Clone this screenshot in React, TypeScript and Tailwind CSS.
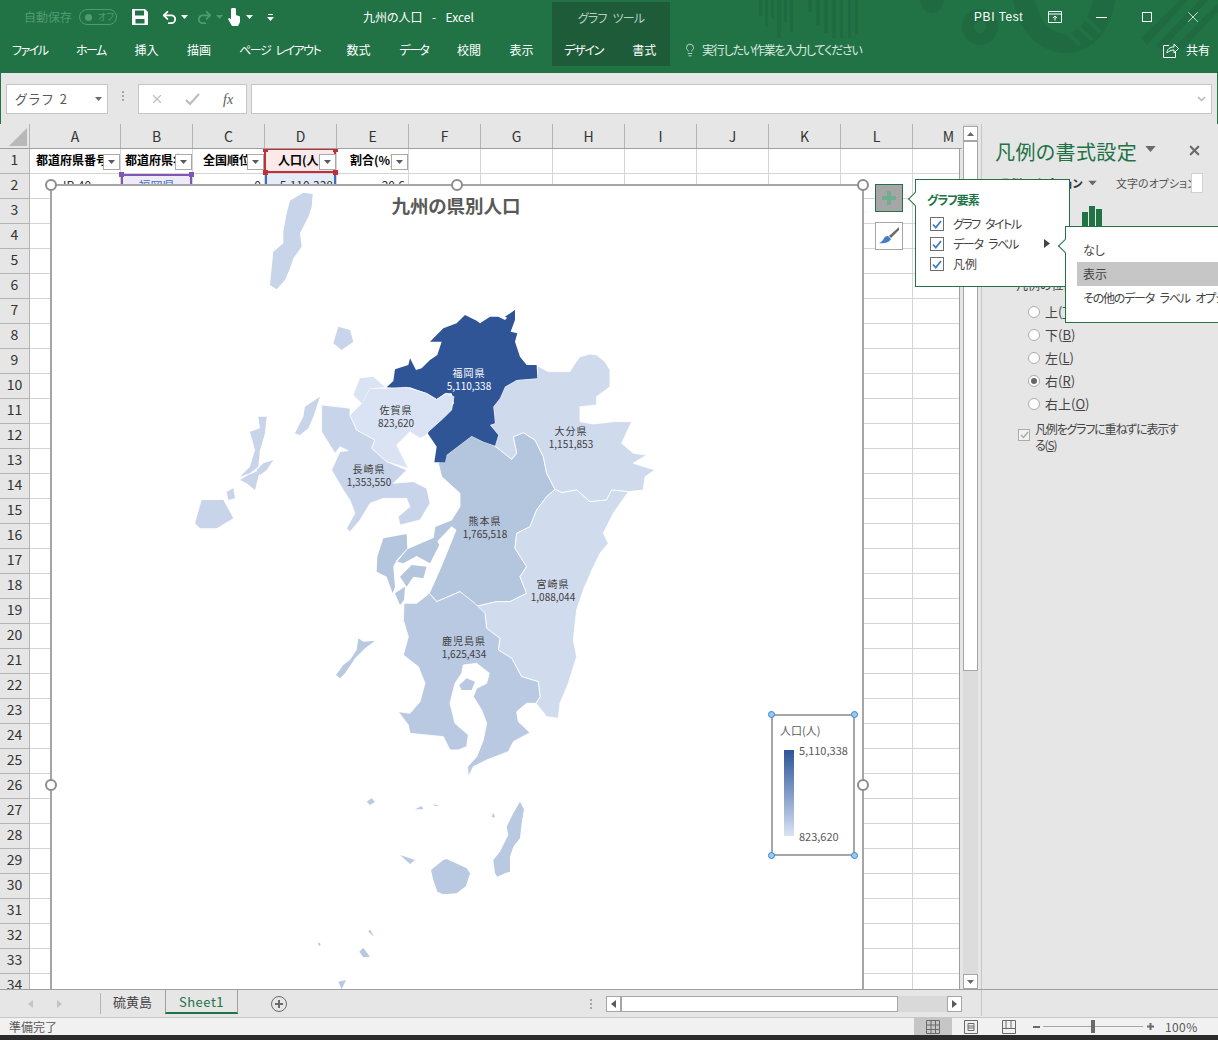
import { Lightbulb, Redo2, Undo2, X } from "lucide-react";

const FONT = "font-['Noto_Sans_CJK_JP','Noto_Sans_CJK_SC',sans-serif] [font-feature-settings:'palt']";

const tabs = [
  { label: "ファイル", w: 35, kana: true },
  { label: "ホーム", w: 31, kana: true },
  { label: "挿入", w: 24 },
  { label: "描画", w: 24 },
  { label: "ページ レイアウト", w: 79, kana: true },
  { label: "数式", w: 24 },
  { label: "データ", w: 30, kana: true },
  { label: "校閲", w: 24 },
  { label: "表示", w: 24 },
];

const columns = [
  { name: "A", w: "w-[91px]" },
  { name: "B", w: "w-[72px]" },
  { name: "C", w: "w-[72px]" },
  { name: "D", w: "w-[72px]" },
  { name: "E", w: "w-[72px]" },
  { name: "F", w: "w-[72px]" },
  { name: "G", w: "w-[72px]" },
  { name: "H", w: "w-[72px]" },
  { name: "I", w: "w-[72px]" },
  { name: "J", w: "w-[72px]" },
  { name: "K", w: "w-[72px]" },
  { name: "L", w: "w-[72px]" },
  { name: "M", w: "w-[72px]" },
];

const rows = Array.from({ length: 34 }, (_, i) => i + 1);

// map outlines, in 3x crop coordinates (see the translate/scale groups below)
const fukuoka = "20,262 40,243 45,208 85,195 90,175 108,210 125,205 150,180 172,165 185,125 150,125 190,85 230,70 255,45 290,62 300,70 330,50 355,50 375,60 405,30 405,60 392,95 412,100 405,125 420,170 440,195 470,195 472,235 410,240 375,260 360,295 340,320 345,370 330,375 355,405 345,437 310,425 275,408 200,465 195,487 163,487 170,440 140,395 160,375 200,340 222,310 215,280 195,280 170,298 140,280 90,262 50,265";
const oita = "472,197 505,215 570,215 585,190 600,170 630,162 650,165 675,185 690,210 690,260 670,275 650,290 650,315 600,320 600,365 640,372 700,365 755,365 725,430 760,460 800,465 760,490 825,510 795,530 790,570 745,575 695,570 680,600 630,605 590,570 545,578 525,568 500,520 490,470 465,420 430,398 400,410 410,460 395,478 360,450 342,437 355,405 330,375 345,370 340,320 360,295 375,260 410,240 472,235";
const kumamoto = "175,490 200,465 275,408 310,425 345,437 395,478 410,460 400,410 430,398 465,420 490,470 500,520 525,568 500,590 470,630 450,680 410,700 405,745 440,800 420,830 440,880 390,905 350,905 285,920 240,875 170,905 148,880 175,820 200,760 228,690 215,680 172,725 160,712 165,680 215,660 240,620 240,580 185,530";
const amakusa = "10,715 80,702 82,745 50,780 40,800 45,860 38,880 20,830 -10,815 -8,770";
const amakusa2 = "82,748 165,712 178,735 150,790 110,768 70,790 52,785";
const amakusa3 = "60,830 95,795 140,800 130,835 100,830 80,860";
const amakusa4 = "45,880 75,860 72,900 60,915";
const miyazaki = "525,568 545,578 590,570 630,605 680,600 695,570 745,575 700,640 670,700 685,730 660,760 636,810 610,870 590,930 580,1020 590,1070 565,1150 540,1210 535,1255 500,1250 468,1210 480,1190 475,1145 425,1130 395,1075 355,1050 360,1015 320,985 315,940 285,920 350,905 390,905 440,880 420,830 440,800 405,745 410,700 450,680 470,630 500,590";
const kagoshima = "222,100 260,100 298,70 320,95 390,65 435,100 465,130 470,175 510,205 505,240 545,265 575,320 625,335 630,380 618,400 590,400 560,425 565,455 600,488 550,515 535,545 470,570 430,590 415,620 413,590 440,560 460,510 470,460 455,420 430,380 440,355 470,340 478,310 440,280 400,285 395,310 375,340 360,400 375,460 415,495 410,530 385,540 360,540 340,500 240,490 235,465 205,425 240,430 270,395 285,340 265,290 220,255 235,200 220,150";
const sakurajima = "388,345 410,325 435,335 425,360 395,360";
const koshiki = "18,315 40,285 60,270 80,240 85,205 100,215 135,212 105,235 75,265 45,310 30,325";
const saga = "510,345 545,310 570,265 620,265 680,262 740,280 770,298 800,280 822,290 815,330 790,355 745,395 740,405 720,415 690,395 650,435 685,505 620,485 575,445 585,420 530,390";
const sagaNorth = "520,285 540,235 580,230 615,262 570,265 545,310";
const nagasaki = "425,315 510,325 510,345 530,390 585,420 575,445 620,485 680,510 640,550 700,545 740,565 750,610 720,660 660,675 655,650 690,620 680,595 610,595 570,610 540,660 510,695 500,685 525,640 510,600 490,570 455,510 480,455 505,452 480,440 465,460 425,395";
const hirado = "345,400 370,350 375,320 420,290 400,350 385,385 360,405";
const fukue = "45,670 65,600 130,600 160,655 110,685 60,685";
const goto2 = "140,575 160,565 165,595 145,600";
const goto3 = "180,540 205,525 240,510 225,570 200,550";
const goto4 = "230,510 250,490 280,480 260,510 240,525";
const goto5 = "210,395 240,385 235,350 260,350 255,400 240,450 235,500 210,520 180,530 210,500 225,450";
const iki = "460,130 475,80 510,90 520,125 485,150";
const tsushima = "110,100 120,62 160,38 188,42 185,80 175,110 150,160 155,200 130,235 120,265 105,300 80,328 60,315 70,215 100,190 100,155";
const southIslands = [
  "580,240 600,215 625,165 620,140 640,100 660,65 672,88 665,130 660,175 640,200 630,230 630,275 615,280 592,290 585,280",
  "393,270 430,240 440,237 500,265 510,280 498,318 470,340 430,343 412,335 400,300",
  "300,225 345,240 330,252",
  "200,65 215,55 225,65 210,75",
  "345,88 365,78 370,88",
  "400,72 418,78 405,78",
  "575,112 580,98 585,112",
  "205,455 210,448 222,470",
  "178,515 190,503 210,530 190,532",
  "115,605 138,600 125,628",
  "54,490 60,488 62,496 56,497",
];

const labels = [
  { x: 469, y: 377, name: "福岡県", num: "5,110,338", fill: "#ffffff" },
  { x: 396, y: 414, name: "佐賀県", num: "823,620", fill: "#404040" },
  { x: 571, y: 435, name: "大分県", num: "1,151,853", fill: "#404040" },
  { x: 369, y: 473, name: "長崎県", num: "1,353,550", fill: "#404040" },
  { x: 485, y: 525, name: "熊本県", num: "1,765,518", fill: "#404040" },
  { x: 553, y: 588, name: "宮崎県", num: "1,088,044", fill: "#404040" },
  { x: 464, y: 645, name: "鹿児島県", num: "1,625,434", fill: "#404040" },
];

const Caret = ({ className }: { className: string }) => (
  <svg width="7" height="4" viewBox="0 0 7 4" className={className}>
    <path d="M0 0h7L3.500 4z" fill="currentColor" />
  </svg>
);

const Handle = ({ className }: { className: string }) => (
  <span className={`absolute w-[12px] h-[12px] rounded-full bg-white border-2 border-[#8c8c8c] ${className}`} />
);

const BlueHandle = ({ className }: { className: string }) => (
  <span className={`absolute w-[7px] h-[7px] rounded-full bg-[#9cc9f2] border border-[#2f86d6] ${className}`} />
);

const Corner = ({ className }: { className: string }) => (
  <span className={`absolute w-[5px] h-[5px] z-10 ${className}`} />
);

const FilterButton = () => (
  <span className="absolute right-0 top-[5px] w-[17px] h-[16px] bg-white border border-[#a9a9a9] flex items-center justify-center z-10">
    <Caret className="text-[#595959]" />
  </span>
);

const CheckRow = ({ label, track }: { label: string; track: string }) => (
  <div className="flex items-center h-[20px] pl-[14px] text-[12px] text-[#444444]">
    <span className="w-[14px] h-[14px] bg-white border border-[#6e6e6e] flex items-center justify-center mr-[9px]">
      <svg width="10" height="9" viewBox="0 0 10 9">
        <path d="M1 4.500 3.800 7.500 9 1" fill="none" stroke="#3f7fbd" strokeWidth="1.800" />
      </svg>
    </span>
    <span className={`whitespace-nowrap ${track}`}>{label}</span>
  </div>
);

const Radio = ({ label, letter, on }: { label: string; letter: string; on?: boolean }) => (
  <div className="flex items-center h-[23px] pl-[46px] text-[13px] text-[#444444]">
    <span className="w-[12px] h-[12px] rounded-full bg-white border border-[#ababab] flex items-center justify-center mr-[5px]">
      {on && <span className="w-[6px] h-[6px] rounded-full bg-[#666666]" />}
    </span>
    {label}(<span className="underline">{letter}</span>)
  </div>
);

const Header = () => (
  <div className="relative h-[73px] bg-[#217346] flex text-white overflow-hidden shrink-0">
    <svg width="1218" height="73" viewBox="0 0 1218 73" className="absolute left-0 top-0">
      <g fill="#1f6a41">
        <path d="M759 0h3v16h-3zM765 0h3v27h-3zM771 0h3v19h-3zM777 0h4v38h-4zM784 0h3v22h-3zM790 0h3v32h-3z" />
        <path d="M808 0h4v12h-4zM816 0h4v26h-4zM824 0h4v33h-4zM832 0h4v38h-4zM840 0h3v38h-3zM848 0h3v38h-3zM855 0h3v34h-3z" />
        <path d="M920 0h24c-2 17-22 17-24 0z" />
        <path fillRule="evenodd" d="M980 9a18 18 0 1 0 .01 0zM980 21a6 6 0 1 1-.01 0z" />
        <path d="M1013 0h22c6 26 20 36 34 33 12-3 20-14 24-33h22c-3 28-22 52-46 53-30 1-50-22-56-53z" />
        <path d="M1141 38 1180 0h8l-41 45zM1156 45 1200 0h8l-46 50zM1176 45 1218 4v8l-36 38z" />
      </g>
      <path d="M1035 0 1080 45M1050 0 1092 40M1066 0 1100 32" stroke="#217346" strokeWidth="4" />
    </svg>

    <div className="relative w-[552px] shrink-0">
      <div className="h-[34px] flex items-center text-[12px]">
        <span className="ml-[24px] text-[#509a72] whitespace-nowrap">自動保存</span>
        <span className="ml-[7px] w-[38px] h-[16px] rounded-full border border-[#509a72] flex items-center text-[#509a72] text-[9px] whitespace-nowrap">
          <span className="ml-[5px] w-[7px] h-[7px] rounded-full bg-[#509a72]" />
          <span className="ml-[6px]">オフ</span>
        </span>
        <svg width="16" height="16" viewBox="0 0 16 16" className="ml-[15px]">
          <path fillRule="evenodd" fill="#ffffff" d="M0 0h13l3 3v13H0zM3 1.500v5h9v-5zM3.500 10v4.500h9V10z" />
        </svg>
        <Undo2 size={17} strokeWidth={2.6} className="ml-[13px]" />
        <Caret className="ml-[3px] text-white" />
        <Redo2 size={17} strokeWidth={2.6} className="ml-[8px] text-[#4f9a70]" />
        <Caret className="ml-[3px] text-[#4f9a70]" />
        <svg width="14" height="18" viewBox="0 0 14 18" className="ml-[4px]">
          <path fill="#ffffff" d="M4 2a2.500 2.500 0 0 1 5 0v5l4 1.500V14l-2 4H5L1 11l1-1 2 1z" />
        </svg>
        <Caret className="ml-[5px] text-white" />
        <svg width="7" height="7" viewBox="0 0 7 7" className="ml-[14px]">
          <path d="M1 0h5v1H1zM0 3h7L3.500 7z" fill="#ffffff" />
        </svg>
        <span className="ml-[89px] text-[12px] whitespace-pre [word-spacing:2px]">九州の人口  -  Excel</span>
      </div>
      <div className="h-[32px] flex items-center pl-[12px] gap-[28.300px] text-[12px]">
        {tabs.map((t) => (
          <span key={t.label} className={`text-center whitespace-nowrap ${t.kana ? "tracking-[-1.500px] [word-spacing:4px]" : ""}`} style={{ width: t.w }}>
            {t.label}
          </span>
        ))}
      </div>
    </div>

    <div className="relative w-[118px] h-[64px] mt-[2px] bg-[#1e5c39] shrink-0 text-[12px]">
      <div className="h-[32px] flex items-center justify-center text-[#b7cfc2] tracking-[-0.800px] [word-spacing:4px] whitespace-nowrap">グラフ ツール</div>
      <div className="h-[32px] flex items-center pl-[12px] gap-[29px] whitespace-nowrap">
        <span className="tracking-[-1.200px]">デザイン</span>
        <span>書式</span>
      </div>
    </div>

    <div className="relative flex-1 min-w-0">
      <div className="h-[34px] flex items-center text-[12px]">
        <span className="ml-[304px] font-['Liberation_Sans',sans-serif] text-[12px] tracking-[0.6px] whitespace-nowrap">PBI Test</span>
        <svg width="14" height="12" viewBox="0 0 14 12" className="ml-[25px] shrink-0">
          <path d="M.5 .5h13v11H.5zM.5 3h13M7 9.500V5M5 7l2-2 2 2" fill="none" stroke="#ffffff" />
        </svg>
        <span className="ml-[34px] w-[11px] h-[1px] bg-white shrink-0" />
        <span className="ml-[35px] w-[10px] h-[10px] border border-white shrink-0" />
        <X size={18} strokeWidth={1} className="ml-[32px] shrink-0" />
      </div>
      <div className="h-[32px] flex items-center text-[12px] whitespace-nowrap">
        <Lightbulb size={14} strokeWidth={1.300} className="ml-[13px] text-[#e3eee8] shrink-0" />
        <span className="ml-[5px] w-[160px] text-[#dbe9e1] tracking-[-1.200px] shrink-0">実行したい作業を入力してください</span>
        <svg width="16" height="15" viewBox="0 0 16 15" className="ml-[301px] shrink-0">
          <path d="M6 2.500H.5v12h12V9M4 10c0-4 3-6 7-6V1l4.500 4.500L11 10V7c-3 0-5 1-7 3z" fill="none" stroke="#ffffff" />
        </svg>
        <span className="ml-[7px]">共有</span>
      </div>
    </div>
  </div>
);

const FormulaBar = () => (
  <div className="h-[51px] bg-[#e6e6e6] flex items-start pt-[11px] shrink-0 border-l border-r border-[#217346]">
    <div className="ml-[5px] w-[102px] h-[30px] bg-white border border-[#c6c6c6] flex items-center justify-between pl-[8px] pr-[5px] text-[13px] text-[#595959]">
      <span className="tracking-[2px] whitespace-nowrap">グラフ 2</span>
      <Caret className="text-[#6a6a6a]" />
    </div>
    <div className="ml-[14px] mt-[7px] flex flex-col gap-[2px]">
      <span className="w-[2px] h-[2px] bg-[#a6a6a6]" />
      <span className="w-[2px] h-[2px] bg-[#a6a6a6]" />
      <span className="w-[2px] h-[2px] bg-[#a6a6a6]" />
    </div>
    <div className="ml-[14px] w-[109px] h-[30px] bg-white border border-[#c6c6c6] flex items-center">
      <X size={14} strokeWidth={2} className="ml-[11px] text-[#bdbdbd]" />
      <svg width="16" height="13" viewBox="0 0 16 13" className="ml-[21px]">
        <path d="M1 7l4 4 9-10" fill="none" stroke="#bdbdbd" strokeWidth="2.200" />
      </svg>
      <span className="ml-[22px] font-['Liberation_Serif',serif] italic text-[14px] text-[#595959]">fx</span>
    </div>
    <div className="ml-[4px] w-[961px] h-[30px] bg-white border border-[#c6c6c6] flex items-center justify-end pr-[5px]">
      <svg width="9" height="6" viewBox="0 0 9 6">
        <path d="M1 1l3.500 3.500L8 1" fill="none" stroke="#b5b5b5" strokeWidth="1.500" />
      </svg>
    </div>
  </div>
);

const HeaderCell = ({ text, pad }: { text: string; pad: string }) => (
  <div className={`relative h-full overflow-hidden whitespace-nowrap font-bold text-[12px] text-black flex items-center pb-[2px] ${pad}`}>
    {text}
    <FilterButton />
  </div>
);

const Sheet = () => (
  <div className="relative w-[962px] h-full overflow-hidden bg-[#e6e6e6]">
    <div className="flex h-[25px] bg-[#e6e6e6] border-b border-[#9f9f9f]">
      <div className="w-[30px] shrink-0 border-r border-[#b5b5b5] flex items-end justify-end p-[2px]">
        <svg width="18" height="18" viewBox="0 0 18 18">
          <path d="M18 0v18H0z" fill="#b8b8b8" />
        </svg>
      </div>
      {columns.map((c) => (
        <div key={c.name} className={`${c.w} shrink-0 border-r border-[#b5b5b5] flex items-center justify-center text-[14px] text-[#333333]`}>
          {c.name}
        </div>
      ))}
    </div>

    <div className="w-[960px] overflow-hidden border-r border-[#9f9f9f] bg-white">
      {rows.map((r) => (
        <div key={r} className="flex h-[25px]">
          <div className="w-[30px] shrink-0 bg-[#e6e6e6] border-r border-b border-[#b5b5b5] flex items-center justify-center pb-[3px] text-[14px] text-[#333333]">
            {r}
          </div>
          {columns.map((c, i) => (
            <div key={c.name} className={`${c.w} relative shrink-0 border-r border-b border-[#d4d4d4]`}>
              {r === 1 && i === 0 && <HeaderCell text="都道府県番号" pad="pl-[6px]" />}
              {r === 1 && i === 1 && <HeaderCell text="都道府県名" pad="pl-[4px]" />}
              {r === 1 && i === 2 && <HeaderCell text="全国順位" pad="pl-[10px]" />}
              {r === 1 && i === 3 && (
                <>
                  <div className="absolute -left-[1px] -top-[1px] right-0 bottom-0 bg-[#f9e9e9] border-2 border-[#c0303a]" />
                  <div className="relative h-full">
                    <HeaderCell text="人口(人)" pad="pl-[13px]" />
                  </div>
                  <Corner className="bg-[#c0303a] -left-[2px] -top-[2px]" />
                  <Corner className="bg-[#c0303a] -right-[2px] -top-[2px]" />
                  <Corner className="bg-[#c0303a] -left-[2px] -bottom-[2px]" />
                  <Corner className="bg-[#c0303a] -right-[2px] -bottom-[2px]" />
                </>
              )}
              {r === 1 && i === 4 && <HeaderCell text="割合(%)" pad="pl-[13px]" />}
              {r === 2 && i === 0 && <div className="h-full flex items-center pl-[30px] pb-[2px] text-[12px] text-[#333333]">JP-40</div>}
              {r === 2 && i === 1 && (
                <>
                  <div className="h-full bg-[#efeaf7] border-x-2 border-t-2 border-[#7e57b5] flex items-center justify-center pb-[2px] text-[12px] text-[#3a6fc0]">
                    福岡県
                  </div>
                  <Corner className="bg-[#7e57b5] -left-[2px] -top-[2px]" />
                  <Corner className="bg-[#7e57b5] -right-[2px] -top-[2px]" />
                </>
              )}
              {r === 2 && i === 2 && <div className="h-full flex items-center justify-end pr-[3px] pb-[2px] text-[12px] text-[#333333]">0</div>}
              {r === 2 && i === 3 && (
                <div className="h-full bg-[#e3ecf8] border-x-2 border-[#3a6fc0] flex items-center justify-end pr-[1px] pb-[2px] text-[12px] text-[#333333]">
                  5,110,338
                </div>
              )}
              {r === 2 && i === 4 && <div className="h-full flex items-center justify-end pr-[3px] pb-[2px] text-[12px] text-[#333333]">20.6</div>}
            </div>
          ))}
        </div>
      ))}
    </div>

    <Chart />
    <Handle className="left-[45px] top-[55px] z-20" />
    <Handle className="left-[451px] top-[55px] z-20" />
    <Handle className="left-[857px] top-[55px] z-20" />
    <Handle className="left-[45px] top-[655px] z-20" />
    <Handle className="left-[857px] top-[655px] z-20" />

    <div className="absolute left-[875px] top-[60px] w-[28px] h-[28px] bg-[#a6a6a6] border border-[#217346] flex items-center justify-center z-20">
      <svg width="14" height="14" viewBox="0 0 14 14">
        <path d="M5 0h4v5h5v4H9v5H5V9H0V5h5z" fill="#6fae8e" />
      </svg>
    </div>
    <div className="absolute left-[875px] top-[98px] w-[28px] h-[28px] bg-white border border-[#a6a6a6] flex items-center justify-center z-20">
      <svg width="22" height="20" viewBox="0 0 22 20">
        <path d="M21 1 11 10l2 2 8-8z" fill="#6b6b6b" />
        <path d="M10 10c-3 0-4 2-5 4-1 1-3 3-4 3 4 1 10 0 12-4z" fill="#3f7fc4" />
      </svg>
    </div>
  </div>
);

const Chart = () => (
  <div className="absolute left-[50px] top-[60px] w-[814px] h-[805px] bg-white border-2 border-b-0 border-[#a6a6a6] z-10">
    <svg width="810" height="803" viewBox="52 186 810 803" className="block">
      <text x="456" y="213" textAnchor="middle" fontSize="18.500" fontWeight="700" fill="#595959">九州の県別人口</text>

      <g transform="translate(380 300) scale(0.3333)" stroke="#ffffff" strokeWidth="2.500" strokeLinejoin="round">
        <polygon points={kumamoto} fill="#b4c5de" />
        <polygon points={amakusa} fill="#b4c5de" strokeWidth="0" />
        <polygon points={amakusa2} fill="#b4c5de" strokeWidth="0" />
        <polygon points={amakusa3} fill="#b4c5de" strokeWidth="0" />
        <polygon points={amakusa4} fill="#b4c5de" strokeWidth="0" />
        <polygon points={oita} fill="#cfdaed" />
        <polygon points={miyazaki} fill="#d0dbed" />
        <polygon points={fukuoka} fill="#2f5597" strokeWidth="0" />
        <polygon points="375,50 405,30 395,60" fill="#2f5597" strokeWidth="0" />
      </g>

      <g transform="translate(330 570) scale(0.3333)" fill="#bac9e2" stroke="#ffffff" strokeWidth="2.500" strokeLinejoin="round">
        <polygon points={kagoshima} />
        <polygon points={sakurajima} strokeWidth="0" />
        <polygon points={koshiki} strokeWidth="0" />
      </g>

      <g transform="translate(180 300) scale(0.3333)" fill="#c7d4e9" stroke="#ffffff" strokeWidth="2" strokeLinejoin="round">
        <polygon points={nagasaki} />
        <polygon points={saga} fill="#dae3f3" />
        <polygon points={sagaNorth} fill="#dae3f3" strokeWidth="0" />
        <polygon points={hirado} strokeWidth="0" />
        <polygon points={fukue} strokeWidth="0" />
        <polygon points={goto2} strokeWidth="0" />
        <polygon points={goto3} strokeWidth="0" />
        <polygon points={goto4} strokeWidth="0" />
        <polygon points={goto5} strokeWidth="0" />
        <polygon points={iki} strokeWidth="0" />
      </g>

      <g transform="translate(250 180) scale(0.3333)" fill="#c7d4e9">
        <polygon points={tsushima} />
      </g>

      <g transform="translate(300 780) scale(0.3333)" fill="#bac9e2">
        {southIslands.map((p) => (
          <polygon key={p} points={p} />
        ))}
      </g>

      {labels.map((l) => (
        <g key={l.name} textAnchor="middle" fontSize="10" fill={l.fill}>
          <text x={l.x} y={l.y} letterSpacing="1">{l.name}</text>
          <text x={l.x} y={l.y + 13}>{l.num}</text>
        </g>
      ))}
    </svg>

    <div className="absolute left-[719px] top-[528px] w-[84px] h-[142px] bg-white border-2 border-[#a6a6a6] text-[#595959]">
      <BlueHandle className="-left-[5px] -top-[5px]" />
      <BlueHandle className="-right-[5px] -top-[5px]" />
      <BlueHandle className="-left-[5px] -bottom-[5px]" />
      <BlueHandle className="-right-[5px] -bottom-[5px]" />
      <div className="pl-[7px] pt-[6px] text-[11px] leading-[16px]">人口(人)</div>
      <div className="flex mt-[12px] pl-[11px] h-[86px]">
        <div className="w-[10px] h-[86px] bg-linear-to-b from-[#2f5597] to-[#dae3f3]" />
        <div className="ml-[5px] flex flex-col justify-between text-[11px] leading-[14px] -mt-[7px] -mb-[8px] h-[100px]">
          <span>5,110,338</span>
          <span>823,620</span>
        </div>
      </div>
    </div>
  </div>
);

const Scrollbar = () => (
  <div className="w-[19px] shrink-0 bg-[#e6e6e6] flex">
    <div className="ml-[1px] w-[15px] h-full pt-[2px] flex flex-col bg-[#dcdcdc]">
      <div className="h-[15px] bg-white border border-[#a6a6a6] flex items-center justify-center shrink-0">
        <Caret className="rotate-180 text-[#6a6a6a]" />
      </div>
      <div className="h-[530px] bg-white border border-[#a6a6a6] shrink-0" />
      <div className="flex-1" />
      <div className="h-[15px] bg-white border border-[#a6a6a6] flex items-center justify-center shrink-0">
        <Caret className="text-[#6a6a6a]" />
      </div>
    </div>
  </div>
);

const Pane = () => (
  <div className="flex-1 bg-[#e6e6e6] border-l border-[#c6c6c6] overflow-hidden">
    <div className="h-[50px] flex items-center pt-[6px] pl-[13px] text-[20px] tracking-[0.4px] text-[#217346] whitespace-nowrap">
      凡例の書式設定
      <Caret className="ml-[10px] mb-[6px] scale-150 text-[#6a6a6a]" />
      <X size={15} strokeWidth={3.5} className="ml-[33px] mb-[4px] text-[#6a6a6a]" />
    </div>
    <div className="h-[18px] flex items-center text-[11px] whitespace-nowrap">
      <span className="ml-[18px] w-[82px] font-bold text-[#333333]">凡例のオプション</span>
      <Caret className="ml-[7px] scale-125 text-[#6a6a6a]" />
      <span className="ml-[20px] w-[75px] overflow-hidden text-[#555555]">文字のオプション</span>
      <span className="w-[12px] h-[20px] bg-white border border-[#d0d0d0] shrink-0" />
    </div>
    <div className="mt-[14px] ml-[100px] flex items-end gap-[1px] h-[20px]">
      <span className="w-[6px] h-[14px] bg-[#217346]" />
      <span className="w-[6px] h-[20px] bg-[#217346]" />
      <span className="w-[6px] h-[17px] bg-[#217346]" />
    </div>
    <div className="mt-[52px] ml-[34px] h-[14px] text-[12px] leading-[14px] text-[#444444]">凡例の位置</div>
    <div className="mt-[8px]">
      <Radio label="上" letter="T" />
      <Radio label="下" letter="B" />
      <Radio label="左" letter="L" />
      <Radio label="右" letter="R" on />
      <Radio label="右上" letter="O" />
    </div>
    <div className="mt-[6px] ml-[36px] flex items-start text-[12px] leading-[16px] text-[#444444]">
      <span className="mt-[8px] mr-[5px] w-[12px] h-[12px] bg-[#f2f2f2] border border-[#ababab] flex items-center justify-center shrink-0">
        <svg width="9" height="8" viewBox="0 0 9 8">
          <path d="M1 4l2.500 2.500L8 1" fill="none" stroke="#a6a6a6" strokeWidth="1.400" />
        </svg>
      </span>
      <span className="w-[146px] tracking-[-1.200px]">凡例をグラフに重ねずに表示する(<span className="underline">S</span>)</span>
    </div>
  </div>
);

const Popups = () => (
  <>
    <div className="absolute left-[915px] top-[55px] w-[155px] h-[108px] bg-white border border-[#217346] z-30">
      <span className="absolute -left-[6px] top-[14px] w-[10px] h-[10px] rotate-45 bg-white border-l border-b border-[#217346]" />
      <div className="pt-[11px] pl-[11px] h-[34px] text-[12px] font-bold text-[#217346] tracking-[-1px]">グラフ要素</div>
      <CheckRow label="グラフ タイトル" track="tracking-[-1.500px] [word-spacing:4px]" />
      <CheckRow label="データ ラベル" track="tracking-[-1.300px] [word-spacing:4px]" />
      <CheckRow label="凡例" track="" />
      <svg width="6" height="9" viewBox="0 0 6 9" className="absolute left-[128px] top-[59px]">
        <path d="M0 0l6 4.500L0 9z" fill="#444444" />
      </svg>
    </div>
    <div className="absolute left-[1065px] top-[102px] w-[153px] h-[97px] bg-white border border-[#217346] border-r-0 z-30">
      <span className="absolute -left-[6px] top-[14px] w-[10px] h-[10px] rotate-45 bg-white border-l border-b border-[#217346]" />
      <div className="mt-[11px] ml-[11px] text-[12px] text-[#444444] overflow-hidden whitespace-nowrap">
        <div className="h-[24px] flex items-center pl-[6px]">なし</div>
        <div className="h-[24px] flex items-center pl-[6px] bg-[#c6c6c6]">表示</div>
        <div className="h-[24px] flex items-center pl-[6px] tracking-[-1.200px] [word-spacing:4px]">その他のデータ ラベル オプション...</div>
      </div>
    </div>
  </>
);

const SheetTabs = () => (
  <div className="h-[28px] shrink-0 bg-[#e6e6e6] border-t border-[#9f9f9f] flex text-[13px]">
    <div className="flex items-center w-[101px] border-r border-[#b5b5b5] h-[21px] mt-[3px]">
      <svg width="5" height="8" viewBox="0 0 5 8" className="ml-[28px]">
        <path d="M5 0v8L0 4z" fill="#c4c4c4" />
      </svg>
      <svg width="5" height="8" viewBox="0 0 5 8" className="ml-[24px]">
        <path d="M0 0v8l5-4z" fill="#c4c4c4" />
      </svg>
    </div>
    <div className="w-[64px] pl-[12px] flex items-center text-[#444444] h-[24px]">硫黄島</div>
    <div className="w-[73px] h-[25px] border-x border-[#9f9f9f] border-b-2 border-b-[#217346] -mt-[1px] flex items-center justify-center pt-[3px] tracking-[0.5px] text-[#217346]">
      Sheet1
    </div>
    <span className="ml-[33px] mt-[6px] w-[16px] h-[16px] rounded-full border border-[#6a6a6a] flex items-center justify-center">
      <svg width="8" height="8" viewBox="0 0 8 8">
        <path d="M3 0h2v3h3v2H5v3H3V5H0V3h3z" fill="#6a6a6a" />
      </svg>
    </span>
    <div className="ml-[303px] mt-[9px] flex flex-col gap-[2px]">
      <span className="w-[2px] h-[2px] bg-[#a6a6a6]" />
      <span className="w-[2px] h-[2px] bg-[#a6a6a6]" />
      <span className="w-[2px] h-[2px] bg-[#a6a6a6]" />
    </div>
    <div className="ml-[14px] mt-[6px] h-[16px] w-[356px] flex bg-[#d9d9d9]">
      <span className="w-[15px] h-full bg-white border border-[#a6a6a6] flex items-center justify-center">
        <svg width="5" height="8" viewBox="0 0 5 8"><path d="M5 0v8L0 4z" fill="#595959" /></svg>
      </span>
      <span className="w-[277px] h-full bg-white border border-[#a6a6a6]" />
      <span className="flex-1" />
      <span className="w-[15px] h-full bg-white border border-[#a6a6a6] flex items-center justify-center">
        <svg width="5" height="8" viewBox="0 0 5 8"><path d="M0 0v8l5-4z" fill="#595959" /></svg>
      </span>
    </div>
    <span className="ml-[19px] w-[1px] h-[26px] bg-[#c6c6c6]" />
  </div>
);

const StatusBar = () => (
  <div className="h-[18px] shrink-0 bg-[#f1f1f1] border-t border-[#c6c6c6] flex items-center text-[12px] text-[#595959]">
    <span className="ml-[9px] w-[905px]">準備完了</span>
    <span className="w-[38px] h-full bg-[#c6c6c6] flex items-center justify-center">
      <svg width="14" height="14" viewBox="0 0 14 14">
        <path d="M.5 .5h13v13H.5zM.5 5h13M.5 9.500h13M5 .5v13M9.500 .5v13" fill="none" stroke="#6a6a6a" />
      </svg>
    </span>
    <span className="w-[38px] flex justify-center">
      <svg width="14" height="14" viewBox="0 0 14 14">
        <path d="M.5 .5h13v13H.5zM4 3.500h6v7H4zM4 6h6M4 8h6" fill="none" stroke="#6a6a6a" />
      </svg>
    </span>
    <span className="w-[38px] flex justify-center">
      <svg width="14" height="14" viewBox="0 0 14 14">
        <path d="M.5 .5h13v13H.5zM.5 8.500h13M4 .5v8M9 .5v8" fill="none" stroke="#6a6a6a" />
      </svg>
    </span>
    <span className="ml-[5px] w-[7px] h-[2px] bg-[#6a6a6a]" />
    <div className="ml-[3px] w-[100px] h-[1px] bg-[#a6a6a6] relative">
      <span className="absolute left-[48px] -top-[6px] w-[4px] h-[13px] bg-[#6a6a6a]" />
    </div>
    <svg width="7" height="7" viewBox="0 0 7 7" className="ml-[4px]">
      <path d="M2.500 0h2v2.500H7v2H4.500V7h-2V4.500H0v-2h2.500z" fill="#6a6a6a" />
    </svg>
    <span className="ml-[11px] tracking-[0.4px]">100%</span>
  </div>
);

export default function App() {
  return (
    <div className={`${FONT} relative w-[1218px] h-[1040px] overflow-hidden flex flex-col bg-[#e6e6e6]`}>
      <Header />
      <FormulaBar />
      <div className="relative h-[865px] flex shrink-0">
        <Sheet />
        <Scrollbar />
        <Pane />
        <Popups />
      </div>
      <SheetTabs />
      <StatusBar />
      <div className="h-[5px] shrink-0 bg-[#2b2b2b]" />
    </div>
  );
}
